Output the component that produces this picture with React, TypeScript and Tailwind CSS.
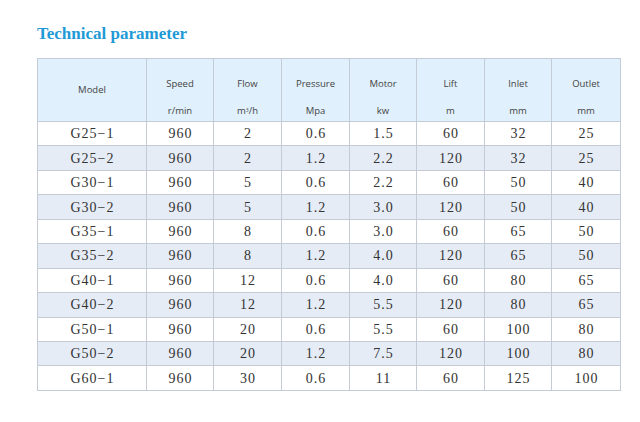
import React from 'react';

type Row = [string, string, string, string, string, string, string, string];

const rows: Row[] = [
  ['G25−1', '960', '2', '0.6', '1.5', '60', '32', '25'],
  ['G25−2', '960', '2', '1.2', '2.2', '120', '32', '25'],
  ['G30−1', '960', '5', '0.6', '2.2', '60', '50', '40'],
  ['G30−2', '960', '5', '1.2', '3.0', '120', '50', '40'],
  ['G35−1', '960', '8', '0.6', '3.0', '60', '65', '50'],
  ['G35−2', '960', '8', '1.2', '4.0', '120', '65', '50'],
  ['G40−1', '960', '12', '0.6', '4.0', '60', '80', '65'],
  ['G40−2', '960', '12', '1.2', '5.5', '120', '80', '65'],
  ['G50−1', '960', '20', '0.6', '5.5', '60', '100', '80'],
  ['G50−2', '960', '20', '1.2', '7.5', '120', '100', '80'],
  ['G60−1', '960', '30', '0.6', '11', '60', '125', '100'],
];

const widths = ['w-[109px]', 'w-[67px]', 'w-[68px]', 'w-[68px]', 'w-[67px]', 'w-[68px]', 'w-[67px]', 'w-[69px]'];

const HeadCell: React.FC<{ label: string; unit: React.ReactNode }> = ({ label, unit }) => (
  <th className="border border-[#c4cbd5] p-0 align-top font-normal text-[9.5px] text-[#444] font-['Open_Sans',sans-serif]">
    <div className="pt-[19px] leading-[12px]">{label}</div>
    <div className="mt-[15px] leading-[12px]">{unit}</div>
  </th>
);

const App: React.FC = () => {
  return (
    <div className="w-[640px] h-[422px] bg-white pl-[37px] pt-[23px]">
      <h2 className="font-['Liberation_Serif',serif] font-bold text-[17px] leading-[21px] text-[#1f9ad6]">
        Technical parameter
      </h2>
      <table className="mt-[14px] border-collapse table-fixed w-[583px]">
        <colgroup>
          {widths.map((w, i) => (
            <col key={i} className={w} />
          ))}
        </colgroup>
        <thead>
          <tr className="h-[63px] bg-[#e0f0fc] text-center">
            <th className="border border-[#c4cbd5] p-0 font-normal align-middle text-[9.5px] text-[#444] font-['Open_Sans',sans-serif]">
              Model
            </th>
            <HeadCell label="Speed" unit="r/min" />
            <HeadCell
              label="Flow"
              unit={
                <>
                  m<sup className="text-[5px]">3</sup>/h
                </>
              }
            />
            <HeadCell label="Pressure" unit="Mpa" />
            <HeadCell label="Motor" unit="kw" />
            <HeadCell label="Lift" unit="m" />
            <HeadCell label="Inlet" unit="mm" />
            <HeadCell label="Outlet" unit="mm" />
          </tr>
        </thead>
        <tbody>
          {rows.map((r, i) => (
            <tr key={i} className={`h-[24.45px] ${i % 2 === 1 ? 'bg-[#e6ecf6]' : 'bg-white'}`}>
              {r.map((c, j) => (
                <td
                  key={j}
                  className="border border-[#c4cbd5] p-0 pl-[1px] pt-[1px] text-center font-['Liberation_Serif',serif] text-[14px] leading-[16px] tracking-[1px] text-[#333]"
                >
                  {c}
                </td>
              ))}
            </tr>
          ))}
        </tbody>
      </table>
    </div>
  );
};

export default App;
